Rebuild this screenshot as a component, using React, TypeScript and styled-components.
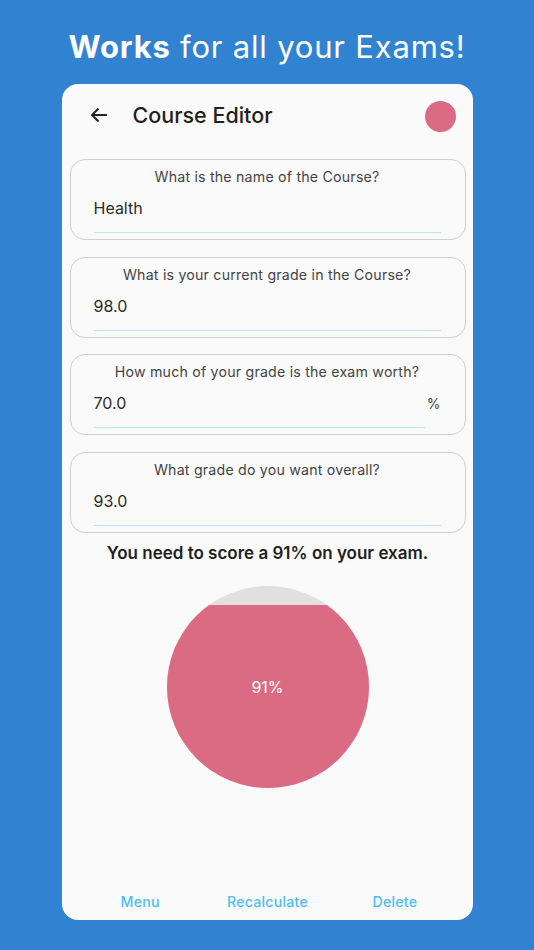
import React from "react";
import styled, { createGlobalStyle } from "styled-components";

const Global = createGlobalStyle`
  html, body { margin: 0; padding: 0; background: #3282d2; }
  body { font-family: Inter, "Open Sans", sans-serif; -webkit-font-smoothing: antialiased; }
  * { box-sizing: border-box; }
`;

const Page = styled.div`
  width: 534px;
  height: 950px;
  background: #3282d2;
  display: flex;
  flex-direction: column;
  align-items: center;
`;

const Headline = styled.h1`
  margin: 0;
  height: 84px;
  display: flex;
  align-items: center;
  justify-content: center;
  padding-top: 8px;
  color: #ffffff;
  font-size: 31px;
  font-weight: 400;
  letter-spacing: 0.8px;
  b { font-weight: 700; }
`;

const Card = styled.div`
  width: 411px;
  height: 836px;
  background: #fafafa;
  border-radius: 16px;
  display: flex;
  flex-direction: column;
  padding: 0 7px 0 8px;
`;

const Header = styled.div`
  height: 75px;
  display: flex;
  align-items: center;
  padding: 0 10px 13px 19px;
`;

const BackButton = styled.button`
  border: 0;
  background: none;
  padding: 0;
  width: 20px;
  height: 20px;
  display: flex;
  align-items: center;
  justify-content: center;
  color: #222;
`;

const Title = styled.div`
  margin-left: 24px;
  font-size: 21.5px;
  font-weight: 500;
  color: #1f1f1f;
  flex: 1;
`;

const Dot = styled.div`
  width: 31px;
  height: 31px;
  border-radius: 50%;
  background: #db6b82;
  margin-top: 2px;
`;

const Fields = styled.div`
  display: flex;
  flex-direction: column;
  gap: 16.7px;
`;

const Field = styled.div`
  height: 81px;
  border: 1px solid #cfcfcf;
  border-radius: 15px;
  padding: 7px 24px 0 23px;
  display: flex;
  flex-direction: column;
`;

const Label = styled.div`
  text-align: center;
  font-size: 14.2px;
  color: #444;
  letter-spacing: 0.2px;
  height: 20px;
  line-height: 20px;
`;

const InputRow = styled.div`
  display: flex;
  align-items: flex-end;
  margin-top: 10px;
`;

const InputWrap = styled.div`
  flex: 1;
  border-bottom: 1.5px solid #bfe3f8;
  height: 36px;
  display: flex;
  align-items: flex-start;
  font-size: 16px;
  color: #2a2a2a;
  padding-top: 1px;
`;

const Suffix = styled.div`
  font-size: 14px;
  color: #444;
  align-self: flex-start;
  padding: 3px 0 0 2px;
`;

const Result = styled.div`
  margin-top: 10px;
  text-align: center;
  font-size: 17px;
  font-weight: 600;
  color: #1f1f1f;
`;

const ChartArea = styled.div`
  flex: 1;
  display: flex;
  justify-content: center;
  padding-top: 23px;
`;

const ChartBox = styled.div`
  position: relative;
  width: 202px;
  height: 202px;
`;

const ChartLabel = styled.div`
  position: absolute;
  inset: 0;
  display: flex;
  align-items: center;
  justify-content: center;
  color: #fff;
  font-size: 16px;
`;

const Footer = styled.div`
  height: 38px;
  display: grid;
  grid-template-columns: 1fr 1fr 1fr;
  align-items: center;
  padding: 0 7px;
`;

const FooterButton = styled.button`
  border: 0;
  background: none;
  padding: 0;
  font-family: inherit;
  font-size: 14.2px;
  font-weight: 500;
  color: #4fbdf2;
  letter-spacing: 0.2px;
`;

const fields = [
  { label: "What is the name of the Course?", value: "Health" },
  { label: "What is your current grade in the Course?", value: "98.0" },
  { label: "How much of your grade is the exam worth?", value: "70.0", suffix: "%" },
  { label: "What grade do you want overall?", value: "93.0" },
];

export default function App() {
  const r = 101;
  const fillTop = 19;
  return (
    <Page>
      <Global />
      <Headline>
        <span>
          <b>Works</b> for all your Exams!
        </span>
      </Headline>
      <Card>
        <Header>
          <BackButton aria-label="back">
            <svg width="18" height="16" viewBox="0 0 18 16" fill="none">
              <path d="M17 8H2M8.5 1.5L2 8l6.5 6.5" stroke="#222" strokeWidth="2" />
            </svg>
          </BackButton>
          <Title>Course Editor</Title>
          <Dot />
        </Header>
        <Fields>
          {fields.map((f) => (
            <Field key={f.label}>
              <Label>{f.label}</Label>
              <InputRow>
                <InputWrap>{f.value}</InputWrap>
                {f.suffix && <Suffix>{f.suffix}</Suffix>}
              </InputRow>
            </Field>
          ))}
        </Fields>
        <Result>You need to score a 91% on your exam.</Result>
        <ChartArea>
          <ChartBox>
            <svg width="202" height="202" viewBox="0 0 202 202">
              <defs>
                <clipPath id="pie">
                  <circle cx={r} cy={r} r={r} />
                </clipPath>
              </defs>
              <g clipPath="url(#pie)">
                <rect x="0" y="0" width="202" height="202" fill="#e0e0e0" />
                <rect x="0" y={fillTop} width="202" height={202 - fillTop} fill="#db6b82" />
              </g>
            </svg>
            <ChartLabel>91%</ChartLabel>
          </ChartBox>
        </ChartArea>
        <Footer>
          <FooterButton>Menu</FooterButton>
          <FooterButton>Recalculate</FooterButton>
          <FooterButton>Delete</FooterButton>
        </Footer>
      </Card>
    </Page>
  );
}
